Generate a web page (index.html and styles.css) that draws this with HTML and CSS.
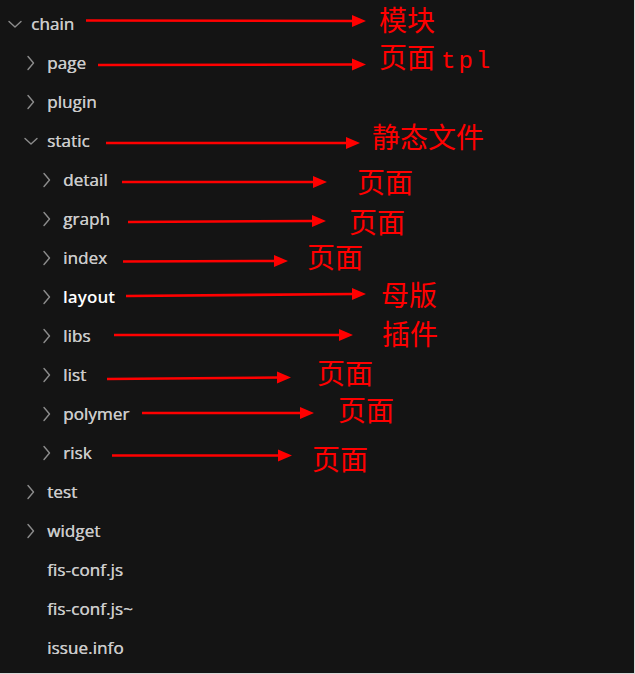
FILE: index.html
```html
<!DOCTYPE html>
<html lang="zh">
<head>
<meta charset="utf-8">
<title>Explorer</title>
<link rel="stylesheet" href="styles.css">
</head>
<body>
<div class="panel">
  <ul class="tree">
    <li class="row lv0"><svg class="chev" viewBox="0 0 16 16"><path d="M2 5.5 L8 11 L14 5.5"/></svg><span class="name">chain</span></li>
    <li class="row lv1"><svg class="chev" viewBox="0 0 16 16"><path d="M5 1.5 L10.5 8 L5 14.5"/></svg><span class="name">page</span></li>
    <li class="row lv1"><svg class="chev" viewBox="0 0 16 16"><path d="M5 1.5 L10.5 8 L5 14.5"/></svg><span class="name">plugin</span></li>
    <li class="row lv1"><svg class="chev" viewBox="0 0 16 16"><path d="M2 5.5 L8 11 L14 5.5"/></svg><span class="name">static</span></li>
    <li class="row lv2"><svg class="chev" viewBox="0 0 16 16"><path d="M5 1.5 L10.5 8 L5 14.5"/></svg><span class="name">detail</span></li>
    <li class="row lv2"><svg class="chev" viewBox="0 0 16 16"><path d="M5 1.5 L10.5 8 L5 14.5"/></svg><span class="name">graph</span></li>
    <li class="row lv2"><svg class="chev" viewBox="0 0 16 16"><path d="M5 1.5 L10.5 8 L5 14.5"/></svg><span class="name">index</span></li>
    <li class="row lv2 active"><svg class="chev" viewBox="0 0 16 16"><path d="M5 1.5 L10.5 8 L5 14.5"/></svg><span class="name">layout</span></li>
    <li class="row lv2"><svg class="chev" viewBox="0 0 16 16"><path d="M5 1.5 L10.5 8 L5 14.5"/></svg><span class="name">libs</span></li>
    <li class="row lv2"><svg class="chev" viewBox="0 0 16 16"><path d="M5 1.5 L10.5 8 L5 14.5"/></svg><span class="name">list</span></li>
    <li class="row lv2"><svg class="chev" viewBox="0 0 16 16"><path d="M5 1.5 L10.5 8 L5 14.5"/></svg><span class="name">polymer</span></li>
    <li class="row lv2"><svg class="chev" viewBox="0 0 16 16"><path d="M5 1.5 L10.5 8 L5 14.5"/></svg><span class="name">risk</span></li>
    <li class="row lv1"><svg class="chev" viewBox="0 0 16 16"><path d="M5 1.5 L10.5 8 L5 14.5"/></svg><span class="name">test</span></li>
    <li class="row lv1"><svg class="chev" viewBox="0 0 16 16"><path d="M5 1.5 L10.5 8 L5 14.5"/></svg><span class="name">widget</span></li>
    <li class="row lv1"><span class="chev-space"></span><span class="name">fis-conf.js</span></li>
    <li class="row lv1"><span class="chev-space"></span><span class="name">fis-conf.js~</span></li>
    <li class="row lv1"><span class="chev-space"></span><span class="name">issue.info</span></li>
  </ul>

  <svg class="arrows" viewBox="0 0 635 674" width="635" height="674">
    <g class="shaft">
      <line x1="86" y1="20.5" x2="354" y2="21"/>
      <line x1="98" y1="65" x2="354" y2="64.5"/>
      <line x1="106" y1="143" x2="348" y2="143"/>
      <line x1="122" y1="182" x2="315" y2="182"/>
      <line x1="128" y1="222" x2="314" y2="221"/>
      <line x1="123" y1="261.5" x2="276" y2="261"/>
      <line x1="126" y1="296" x2="354" y2="294"/>
      <line x1="114" y1="335" x2="341" y2="335"/>
      <line x1="107" y1="379" x2="279" y2="377.5"/>
      <line x1="142" y1="413" x2="302" y2="413"/>
      <line x1="112" y1="455.5" x2="280" y2="455.5"/>
    </g>
    <g class="head">
      <polygon points="352,15 366,21 352,27"/>
      <polygon points="352,58.5 366,64.5 352,70.5"/>
      <polygon points="346,137 360,143 346,149"/>
      <polygon points="313,176 327,182 313,188"/>
      <polygon points="312,215 326,221 312,227"/>
      <polygon points="274,255 288,261 274,267"/>
      <polygon points="352,288 366,294 352,300"/>
      <polygon points="339,329 353,335 339,341"/>
      <polygon points="277,371.5 291,377.5 277,383.5"/>
      <polygon points="300,407 314,413 300,419"/>
      <polygon points="278,449.5 292,455.5 278,461.5"/>
    </g>
  </svg>

  <span class="note" style="left:379px;top:5px">模块</span>
  <span class="note" style="left:379px;top:42px">页面<span class="latin">tpl</span></span>
  <span class="note" style="left:372px;top:122px">静态文件</span>
  <span class="note" style="left:357px;top:167px">页面</span>
  <span class="note" style="left:349px;top:207px">页面</span>
  <span class="note" style="left:307px;top:242px">页面</span>
  <span class="note" style="left:381px;top:280px">母版</span>
  <span class="note" style="left:382px;top:319px">插件</span>
  <span class="note" style="left:317px;top:358px">页面</span>
  <span class="note" style="left:338px;top:395px">页面</span>
  <span class="note" style="left:312px;top:444px">页面</span>
</div>
</body>
</html>
```
FILE: styles.css
```css
html, body {
  margin: 0;
  padding: 0;
  background: #141414;
}

.panel {
  position: relative;
  width: 634px;
  height: 673px;
  background: #141414;
  border-right: 1px solid #d8d8d8;
  border-bottom: 1px solid #d8d8d8;
  overflow: hidden;
  font-family: "Open Sans", "Noto Sans", sans-serif;
}

.tree {
  list-style: none;
  margin: 0;
  padding: 4px 0 0 0;
}

.row {
  display: flex;
  align-items: center;
  height: 39px;
  gap: 8px;
  color: #cbcbcb;
  font-size: 17px;
  line-height: 1;
}

.lv0 { padding-left: 7px; }
.lv1 { padding-left: 23px; }
.lv2 { padding-left: 39px; }

.chev, .chev-space {
  width: 16px;
  height: 16px;
  flex: none;
}

.chev path {
  fill: none;
  stroke: #8c8c8c;
  stroke-width: 1.4;
  stroke-linecap: round;
  stroke-linejoin: round;
}

.name {
  position: relative;
  top: 0;
  letter-spacing: 0.1px;
  text-shadow: 0.4px 0 0 currentColor;
}

.active .name {
  color: #ffffff;
  font-weight: 600;
  text-shadow: none;
}

.arrows {
  position: absolute;
  left: 0;
  top: 0;
  pointer-events: none;
}

.shaft line {
  stroke: #ff0000;
  stroke-width: 2.6;
}

.head polygon {
  fill: #ff0000;
}

.note {
  position: absolute;
  color: #ff0000;
  font-family: "Noto Sans CJK SC", "Noto Sans", sans-serif;
  font-size: 28px;
  line-height: 1;
  font-weight: 400;
  white-space: nowrap;
}

.note .latin {
  font-family: "Liberation Mono", monospace;
  font-size: 24px;
  margin-left: 6px;
  letter-spacing: 3px;
}
```
